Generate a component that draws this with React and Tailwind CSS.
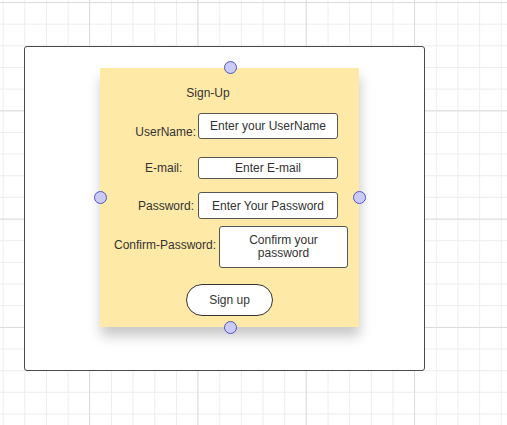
export default function App() {
  return (
    <div
      className="relative w-[507px] h-[425px] overflow-hidden bg-white text-[#333] text-[12px] leading-[14px] font-['Liberation_Sans',Arial,sans-serif]
        bg-[image:linear-gradient(to_right,#dcdcdc_1px,transparent_1px),linear-gradient(to_bottom,#dcdcdc_1px,transparent_1px),linear-gradient(to_right,#ededed_1px,transparent_1px),linear-gradient(to_bottom,#ededed_1px,transparent_1px)]
        bg-[size:108.33px_108.33px,108.33px_108.33px,21.67px_21.67px,21.67px_21.67px]
        bg-[position:89px_2px,89px_2px,2.7px_2px,2.7px_2px]"
    >
      {/* outer frame */}
      <div className="absolute left-[24px] top-[46px] w-[401px] h-[325px] bg-white border border-[#4a4a4a] rounded-[3px]" />

      {/* sticky note */}
      <div className="absolute left-[100px] top-[68px] w-[259px] h-[259px] bg-[#ffe9a6] shadow-[1px_9px_12px_rgba(0,0,0,0.22)] flex flex-col pt-[18px]">
        <div className="w-[216px] text-center">Sign-Up</div>

        <div className="flex items-end mt-[13px] h-[26px]">
          <div className="w-[96px] text-right">UserName:</div>
          <Field className="ml-[2px] w-[140px] h-[26px]">Enter your UserName</Field>
        </div>

        <div className="flex items-center mt-[18px] h-[22px]">
          <div className="w-[98px] pl-[45px]">E-mail:</div>
          <Field className="w-[140px] h-[22px]">Enter E-mail</Field>
        </div>

        <div className="flex items-center mt-[13px] h-[27px]">
          <div className="w-[98px] pl-[38px]">Password:</div>
          <Field className="w-[140px] h-[27px]">Enter Your Password</Field>
        </div>

        <div className="flex items-center mt-[7px] h-[42px]">
          <div className="w-[119px] pl-[14px] pb-[5px]">Confirm-Password:</div>
          <Field className="w-[129px] h-[42px] leading-[13.5px]">
            Confirm your
            <br />
            password
          </Field>
        </div>

        <button className="self-center mt-[16px] w-[87px] h-[32px] rounded-full bg-white border border-[#333] text-[#333] text-[12px]">
          Sign up
        </button>
      </div>

      {/* selection handles */}
      <Handle x={230} y={67} />
      <Handle x={230} y={327} />
      <Handle x={100.5} y={197} />
      <Handle x={359.5} y={197} />
    </div>
  )
}

function Field({ className, children }) {
  return (
    <div className={`flex items-center justify-center text-center bg-white border border-[#555] rounded-[3px] ${className}`}>
      <span>{children}</span>
    </div>
  )
}

function Handle({ x, y }) {
  return (
    <div
      className="absolute w-[13px] h-[13px] rounded-full bg-[#cbcbf7] border border-[#5252cc]"
      style={{ left: x - 6.5, top: y - 6.5 }}
    />
  )
}
